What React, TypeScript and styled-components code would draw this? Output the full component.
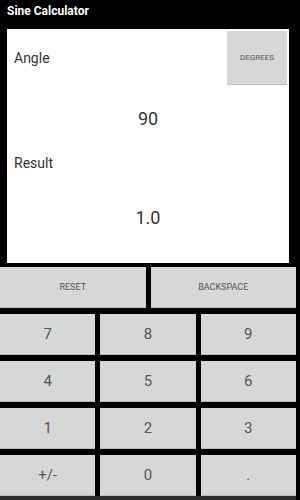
import React from "react";
import styled, { createGlobalStyle } from "styled-components";

const Global = createGlobalStyle`
  html, body { margin: 0; padding: 0; background: #000; }
  body { font-family: Roboto, "Noto Sans", "Liberation Sans", sans-serif; }
`;

const Screen = styled.div`
  width: 300px;
  height: 500px;
  background: #000;
  display: flex;
  flex-direction: column;
  overflow: hidden;
  & > * { flex-shrink: 0; }
`;

const TitleBar = styled.div`
  height: 29px;
  box-sizing: border-box;
  padding: 3px 0 0 7px;
  color: #fff;
  font-size: 12px;
  font-weight: 700;
  line-height: 16px;
`;

const Main = styled.div`
  width: 296px;
  display: flex;
  flex-direction: column;
  & > * { flex-shrink: 0; }
`;

const Panel = styled.div`
  margin: 0 7px;
  height: 234px;
  box-sizing: border-box;
  background: #fff;
  padding: 2px 2px 2px 7px;
  display: flex;
  flex-direction: column;
`;

const HeaderRow = styled.div`
  height: 54px;
  display: flex;
  align-items: center;
  justify-content: space-between;
`;

const Label = styled.div<{ $h: number }>`
  height: ${(p) => p.$h}px;
  display: flex;
  align-items: center;
  font-size: 14px;
  color: #333;
`;

const Value = styled.div<{ $h: number }>`
  height: ${(p) => p.$h}px;
  display: flex;
  align-items: center;
  justify-content: center;
  font-size: 18px;
  color: #333;
  margin-left: -5px;
`;

const ModeButton = styled.div`
  width: 60px;
  height: 54px;
  background: #d6d7d7;
  border-bottom: 1px solid #bdbdbd;
  box-sizing: border-box;
  display: flex;
  align-items: center;
  justify-content: center;
  font-size: 8px;
  color: #555;
`;

const Keys = styled.div<{ $cols: number }>`
  display: grid;
  grid-template-columns: repeat(${(p) => p.$cols}, 1fr);
  column-gap: 5px;
`;

const KeyPad = styled.div`
  display: flex;
  flex-direction: column;
  gap: 6px;
  padding-top: 4px;
`;

const Key = styled.div<{ $small?: boolean }>`
  height: 41px;
  background: #d6d7d7;
  border-bottom: 1px solid #b9baba;
  box-sizing: border-box;
  display: flex;
  align-items: center;
  justify-content: center;
  color: #555;
  font-size: ${(p) => (p.$small ? "9px" : "15px")};
`;

const BottomStrip = styled.div`
  height: 4px;
  background: #2b2b2b;
`;

const rows = [
  ["7", "8", "9"],
  ["4", "5", "6"],
  ["1", "2", "3"],
  ["+/-", "0", "."],
];

export default function App() {
  return (
    <Screen>
      <Global />
      <TitleBar>Sine Calculator</TitleBar>
      <Main>
        <Panel>
          <HeaderRow>
            <Label $h={54}>Angle</Label>
            <ModeButton>DEGREES</ModeButton>
          </HeaderRow>
          <Value $h={67}>90</Value>
          <Label $h={21}>Result</Label>
          <Value $h={88}>1.0</Value>
        </Panel>
        <KeyPad>
          <Keys $cols={2}>
            <Key $small>RESET</Key>
            <Key $small>BACKSPACE</Key>
          </Keys>
          {rows.map((r, i) => (
            <Keys $cols={3} key={i}>
              {r.map((k) => (
                <Key key={k}>{k}</Key>
              ))}
            </Keys>
          ))}
        </KeyPad>
        <BottomStrip />
      </Main>
    </Screen>
  );
}
